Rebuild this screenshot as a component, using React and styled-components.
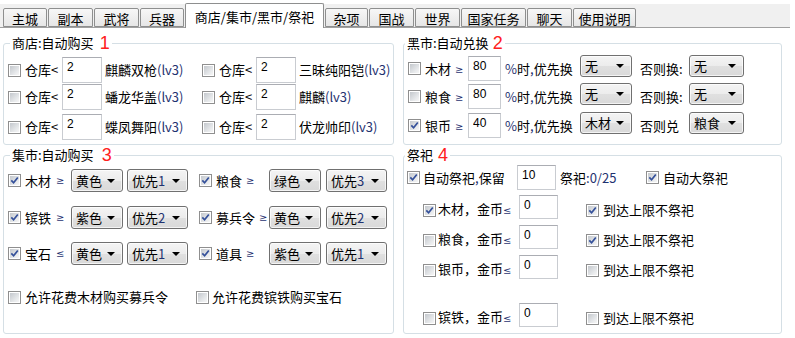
import React from 'react';
import styled, { createGlobalStyle } from 'styled-components';

const Global = createGlobalStyle`
  html, body { margin: 0; padding: 0; background: #fff; }
  body {
    font-family: "Noto Sans CJK SC", "Noto Sans", sans-serif;
    font-size: 13px;
    color: #000;
  }
  * { box-sizing: border-box; }
`;

const Page = styled.div`
  width: 795px;
  height: 338px;
  overflow: hidden;
  padding-top: 4px;
`;

const TabStrip = styled.div`
  display: flex;
  align-items: flex-end;
  gap: 1px;
  width: 790px;
  height: 24px;
  padding-left: 3px;
  background: #f0f0f0;
  border-bottom: 1px solid #a0a0a0;
`;

const Tab = styled.div`
  flex: none;
  width: ${p => p.$w}px;
  height: ${p => (p.$active ? 25 : 19)}px;
  margin-bottom: ${p => (p.$active ? -1 : 0)}px;
  border: 1px solid #8e8f8f;
  border-bottom: ${p => (p.$active ? 'none' : '1px solid #8e8f8f')};
  border-radius: 2px 2px 0 0;
  background: ${p => (p.$active ? '#fff' : 'linear-gradient(#f7f7f7, #e6e6e6)')};
  display: flex;
  align-items: center;
  justify-content: center;
  padding-top: ${p => (p.$active ? 0 : 1)}px;
  font-size: 13px;
  line-height: 1;
  white-space: nowrap;
  position: relative;
  z-index: ${p => (p.$active ? 1 : 0)};
`;

const Panels = styled.div`
  display: grid;
  grid-template-columns: 391px 379px;
  grid-template-rows: 102px 179px;
  column-gap: 9px;
  row-gap: 10px;
  padding: 15px 0 0 3px;
`;

const Group = styled.section`
  border: 1px solid #d5dfe5;
  border-radius: 3px;
  padding-left: ${p => p.$pl}px;
  display: flex;
  flex-direction: column;
`;

const Legend = styled.div`
  align-self: flex-start;
  margin: -9px 0 0 ${p => p.$ml}px;
  padding: 0 2px;
  height: 16px;
  line-height: 16px;
  background: #fff;
  display: flex;
  align-items: center;
  gap: ${p => p.$gap}px;
  white-space: nowrap;
`;

const Num = styled.span`
  font-family: "Liberation Sans", Arial, sans-serif;
  font-size: 18px;
  line-height: 16px;
  color: #ff2020;
`;

const Row = styled.div`
  display: flex;
  align-items: center;
  height: ${p => p.$h}px;
  margin-top: ${p => p.$mt}px;
  padding-left: ${p => p.$indent || 0}px;
`;

const TwoCol = styled.div`
  display: grid;
  grid-template-columns: ${p => p.$col}px 1fr;
  align-items: center;
  height: ${p => p.$h}px;
  margin-top: ${p => p.$mt}px;
`;

const Cell = styled.div`
  display: flex;
  align-items: center;
  height: 100%;
  white-space: nowrap;
`;

const Text = styled.span`
  flex: none;
  white-space: nowrap;
  width: ${p => (p.$w ? `${p.$w}px` : 'auto')};
  margin-left: ${p => p.$ml || 0}px;
  line-height: 16px;
`;

const Latin = styled.span`
  color: #1f3270;
`;

const Sym = styled.span`
  font-family: "DejaVu Sans", "Liberation Sans", sans-serif;
  font-size: 10px;
  color: #1f3270;
  margin-left: ${p => p.$ml || 0}px;
`;

const NameSym = styled.span`
  flex: none;
  display: flex;
  align-items: center;
  width: ${p => p.$w}px;
  white-space: nowrap;
`;

const Field = styled.input`
  flex: none;
  width: ${p => p.$w}px;
  height: ${p => p.$h}px;
  margin: 0 0 ${p => p.$mb || 0}px ${p => p.$ml || 0}px;
  border: 1px solid #c9ccd1;
  border-top-color: #abadb3;
  border-radius: 0;
  background: #fff;
  padding: 2px 0 ${p => p.$h - 17}px 4px;
  font-family: "Liberation Sans", Arial, sans-serif;
  font-size: 12px;
  line-height: 14px;
  color: #000;
  outline: none;
`;

const SelectBox = styled.div`
  flex: none;
  width: ${p => p.$w}px;
  height: ${p => p.$h}px;
  margin: 0 0 ${p => p.$mb || 0}px ${p => p.$ml || 0}px;
  border: 1px solid #707070;
  border-radius: 3px;
  background: linear-gradient(#f4f4f4, #ececec 50%, #e0e0e0 51%, #d9d9d9);
  box-shadow: inset 0 0 0 1px rgba(255, 255, 255, 0.7);
  display: flex;
  align-items: center;
  justify-content: space-between;
  padding: 0 7px 0 4px;
  font-size: 13px;
  line-height: 16px;
  white-space: nowrap;
`;

const Arrow = styled.span`
  width: 0;
  height: 0;
  border-left: 4px solid transparent;
  border-right: 4px solid transparent;
  border-top: 4px solid #000;
`;

const BoxOuter = styled.span`
  flex: none;
  width: 13px;
  height: 13px;
  border: 1px solid #8f8f8f;
  background: #fff;
  padding: 1px;
  display: inline-flex;
  margin-right: ${p => p.$mr}px;
  margin-left: ${p => p.$ml || 0}px;
`;

const BoxInner = styled.span`
  flex: 1;
  display: flex;
  align-items: center;
  justify-content: center;
  background: linear-gradient(135deg, #c4c8cd, #e8eaec 70%, #f6f6f6);
`;

function CheckBox({ checked, mr = 4, ml }) {
  return (
    <BoxOuter $mr={mr} $ml={ml}>
      <BoxInner>
        {checked && (
          <svg width="9" height="9" viewBox="0 0 9 9">
            <path d="M1.3 4.3 L3.6 6.8 L7.8 1.4" fill="none" stroke="#34509a" strokeWidth="1.7" />
          </svg>
        )}
      </BoxInner>
    </BoxOuter>
  );
}

function Select({ value, w, h, ml, mb }) {
  return (
    <SelectBox $w={w} $h={h} $ml={ml} $mb={mb}>
      <span>{value}</span>
      <Arrow />
    </SelectBox>
  );
}

function WithLatin({ text }) {
  const parts = text.split(/([A-Za-z0-9()/%]+)/);
  return parts.map((p, i) => (/[A-Za-z0-9()/%]/.test(p) ? <Latin key={i}>{p}</Latin> : <React.Fragment key={i}>{p}</React.Fragment>));
}

const tabs = [
  ['主城', 44], ['副本', 45], ['武将', 45], ['兵器', 44],
  ['商店/集市/黑市/祭祀', 139, true], ['杂项', 43], ['国战', 45], ['世界', 45],
  ['国家任务', 65], ['聊天', 45], ['使用说明', 63],
];

const shopRows = [
  { mt: 6, items: ['麒麟双枪', '三昧纯阳铠'] },
  { mt: 1, items: ['蟠龙华盖', '麒麟'] },
  { mt: 4, items: ['蝶凤舞阳', '伏龙帅印'] },
];

const blackRows = [
  { mt: 5, name: '木材', checked: false, val: '80', first: '无', elseLabel: '否则换:', second: '无' },
  { mt: 3, name: '粮食', checked: false, val: '80', first: '无', elseLabel: '否则换:', second: '无' },
  { mt: 4, name: '银币', checked: true, val: '40', first: '木材', elseLabel: '否则兑', second: '粮食' },
];

const marketRows = [
  { mt: 6, items: [['木材', '≥', '黄色', '优先1'], ['粮食', '≥', '绿色', '优先3']] },
  { mt: 14, items: [['镔铁', '≥', '紫色', '优先2'], ['募兵令', '≥', '黄色', '优先2']] },
  { mt: 13, items: [['宝石', '≤', '黄色', '优先1'], ['道具', '≥', '紫色', '优先1']] },
];

const sacrificeRows = [
  { mt: 5, name: '木材', checked: true, limit: true },
  { mt: 0, name: '粮食', checked: false, limit: true },
  { mt: 0, name: '银币', checked: false, limit: false },
  { mt: 18, name: '镔铁', checked: false, limit: false },
];

export default function App() {
  return (
    <>
      <Global />
      <Page>
        <TabStrip>
          {tabs.map(([t, w, a]) => (
            <Tab key={t} $w={w} $active={a}>{t}</Tab>
          ))}
        </TabStrip>
        <Panels>
          <Group $pl={4}>
            <Legend $ml={2} $gap={6}>商店:自动购买<Num>1</Num></Legend>
            {shopRows.map((r, i) => (
              <TwoCol key={i} $col={194} $h={26} $mt={r.mt}>
                {r.items.map(name => (
                  <Cell key={name}>
                    <CheckBox />
                    <Text $w={37}>仓库&lt;</Text>
                    <Field $w={40} $h={26} defaultValue="2" readOnly />
                    <Text $ml={3}>{name}<Latin>(lv3)</Latin></Text>
                  </Cell>
                ))}
              </TwoCol>
            ))}
          </Group>

          <Group $pl={4}>
            <Legend $ml={-3} $gap={4}>黑市:自动兑换<Num>2</Num></Legend>
            {blackRows.map(r => (
              <Row key={r.name} $h={25} $mt={r.mt}>
                <CheckBox checked={r.checked} />
                <Text $w={30}>{r.name}</Text>
                <Text $w={13}><Sym>≥</Sym></Text>
                <Field $w={33} $h={25} defaultValue={r.val} readOnly />
                <Text $w={75} $ml={4}><Latin>%</Latin>时<Latin>,</Latin>优先换</Text>
                <Select value={r.first} w={52} h={22} mb={5} />
                <Text $w={49} $ml={8}>{r.elseLabel}</Text>
                <Select value={r.second} w={55} h={22} mb={5} />
              </Row>
            ))}
          </Group>

          <Group $pl={4}>
            <Legend $ml={2} $gap={8}>集市:自动购买<Num>3</Num></Legend>
            {marketRows.map((r, i) => (
              <TwoCol key={i} $col={191} $h={23} $mt={r.mt}>
                {r.items.map(([name, sym, color, prio], j) => (
                  <Cell key={name}>
                    <CheckBox checked />
                    <NameSym $w={j === 0 ? 46 : 53}>
                      {name}
                      <Sym $ml={j === 0 ? 5 : 4}>{sym}</Sym>
                    </NameSym>
                    <Select value={color} w={52} h={23} />
                    <Select value={<WithLatin text={prio} />} w={61} h={23} ml={j === 0 ? 4 : 5} />
                  </Cell>
                ))}
              </TwoCol>
            ))}
            <TwoCol $col={188} $h={16} $mt={24}>
              <Cell>
                <CheckBox />
                <Text>允许花费木材购买募兵令</Text>
              </Cell>
              <Cell>
                <CheckBox mr={3} />
                <Text>允许花费镔铁购买宝石</Text>
              </Cell>
            </TwoCol>
          </Group>

          <Group $pl={3}>
            <Legend $ml={-2} $gap={5}>祭祀<Num>4</Num></Legend>
            <Row $h={25} $mt={2}>
              <CheckBox checked mr={3} />
              <Text $w={94}>自动祭祀<Latin>,</Latin>保留</Text>
              <Field $w={39} $h={25} defaultValue="10" readOnly />
              <Text $w={86} $ml={4}>祭祀<Latin>:0/25</Latin></Text>
              <CheckBox checked />
              <Text>自动大祭祀</Text>
            </Row>
            {sacrificeRows.map(r => (
              <Row key={r.name} $h={30} $mt={r.mt} $indent={16}>
                <CheckBox checked={r.checked} mr={2} />
                <Text $w={81}>{r.name}，金币<Sym>≤</Sym></Text>
                <Field $w={39} $h={24} $mb={6} defaultValue="0" readOnly />
                <CheckBox checked={r.limit} ml={28} />
                <Text>到达上限不祭祀</Text>
              </Row>
            ))}
          </Group>
        </Panels>
      </Page>
    </>
  );
}
